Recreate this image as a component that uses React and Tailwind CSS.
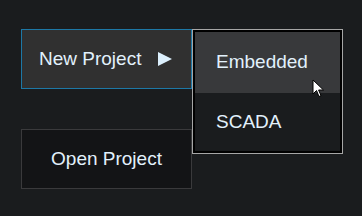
import React from 'react';

function Cursor() {
  return (
    <svg className="absolute left-[312px] top-[79px]" width="13" height="19" viewBox="0 0 13 19">
      <path d="M1 1 L1 15 L4.5 11.5 L7 17.5 L9 16.6 L6.6 11 L11.5 11 Z" fill="#ffffff" stroke="#000000" strokeWidth="1" strokeLinejoin="miter" />
    </svg>
  );
}

export default function App() {
  return (
    <div
      className="relative w-[362px] h-[216px] bg-[#1a1c1e] text-[#e2f1fc] overflow-hidden"
      style={{ fontFamily: '"Liberation Sans", Arial, sans-serif' }}
    >
      <div className="flex flex-col gap-[40px] pl-[21px] pt-[29px]">
        <button className="flex items-center w-[171px] h-[60px] bg-[#303030] border border-[#1d78a6] pl-[17px] text-[19px]">
          <span>New Project</span>
          <svg className="ml-[17px]" width="14" height="14" viewBox="0 0 14 14">
            <path d="M0 0 L14 7 L0 14 Z" fill="#dcf0fd" />
          </svg>
        </button>
        <button className="flex items-center justify-center w-[171px] h-[60px] bg-[#131416] border border-[#3a3a3c] text-[19px]">
          Open Project
        </button>
      </div>

      {/* submenu */}
      <div className="absolute left-[192px] top-[29px] w-[151px] h-[125px] border border-[#a6a6a6] bg-black p-[2px]">
        <div className="flex flex-col h-full">
          <div className="flex items-center h-[61px] bg-[#38393b] pl-[21px] text-[19px]">Embedded</div>
          <div className="flex items-center flex-1 bg-[#1a1c1e] pl-[21px] text-[19px]">SCADA</div>
        </div>
      </div>

      <Cursor />
    </div>
  );
}
